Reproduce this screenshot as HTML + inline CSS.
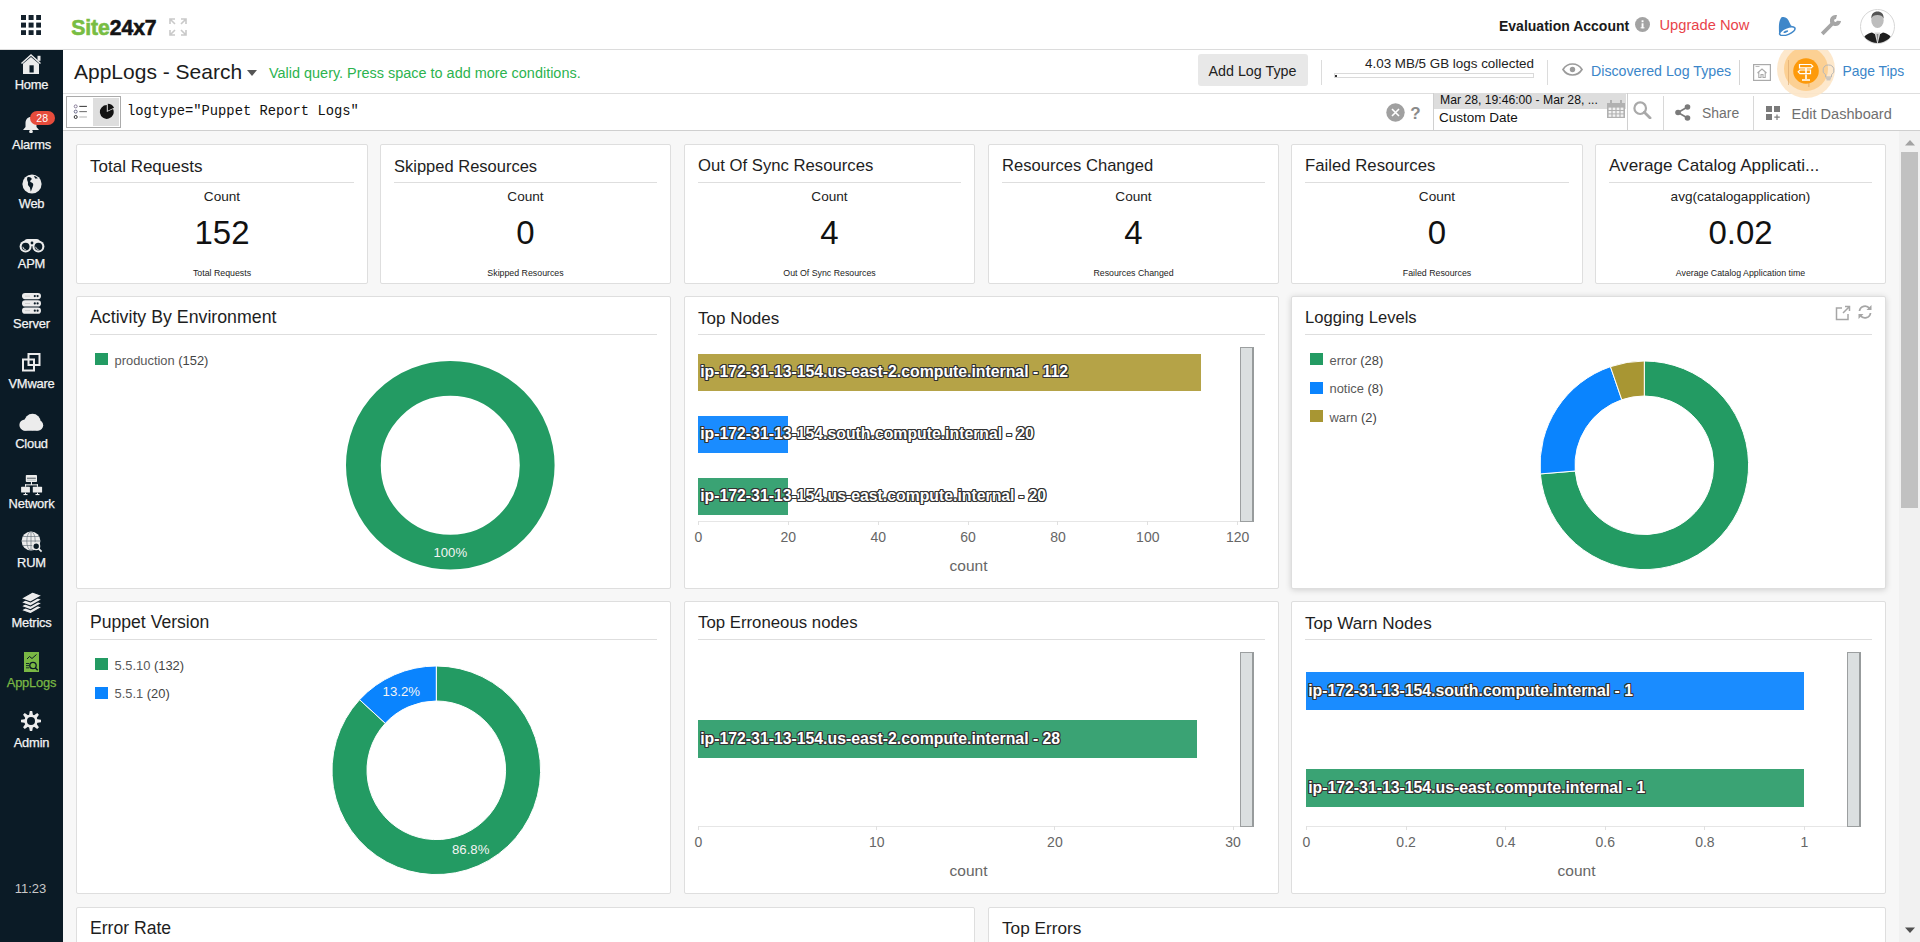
<!DOCTYPE html>
<html><head><meta charset="utf-8"><title>AppLogs - Search</title>
<style>
html,body{margin:0;padding:0;}
body{width:1920px;height:942px;overflow:hidden;position:relative;background:#f7f7f7;font-family:"Liberation Sans",sans-serif;}
.t{position:absolute;white-space:nowrap;font-family:"Liberation Sans",sans-serif;}
.mo{font-family:"Liberation Mono",monospace;}
svg{display:block;}
</style></head><body>

<div style="position:absolute;left:0px;top:0px;width:1920px;height:49px;background:#fff;"></div>
<div style="position:absolute;left:0px;top:49px;width:1920px;height:1px;background:#dcdcdc;"></div>
<svg style="position:absolute;left:21px;top:15px;" width="20.2" height="20.2" viewBox="0 0 20.2 20.2"><rect x="0" y="0" width="5" height="5" fill="#15222d"/><rect x="0" y="7.6" width="5" height="5" fill="#15222d"/><rect x="0" y="15.2" width="5" height="5" fill="#15222d"/><rect x="7.6" y="0" width="5" height="5" fill="#15222d"/><rect x="7.6" y="7.6" width="5" height="5" fill="#15222d"/><rect x="7.6" y="15.2" width="5" height="5" fill="#15222d"/><rect x="15.2" y="0" width="5" height="5" fill="#15222d"/><rect x="15.2" y="7.6" width="5" height="5" fill="#15222d"/><rect x="15.2" y="15.2" width="5" height="5" fill="#15222d"/></svg>
<div class="t" style="left:71.30px;top:16.54px;font-size:21.20px;line-height:21.20px;color:#222;font-weight:700;letter-spacing:-0.1px;"><span style="color:#78bd43;-webkit-text-stroke:0.6px #78bd43">Site</span><span style="color:#141414;-webkit-text-stroke:0.6px #141414">24x7</span></div>
<svg style="position:absolute;left:169px;top:18px;" width="18" height="18" viewBox="0 0 18 18"><g stroke="#c9c9c9" stroke-width="1.6" fill="none"><path d="M1 6V1h5M1 1l5 5"/><path d="M17 6V1h-5M17 1l-5 5"/><path d="M1 12v5h5M1 17l5-5"/><path d="M17 12v5h-5M17 17l-5-5"/></g></svg>
<div class="t" style="left:1499.00px;top:18.94px;font-size:14.00px;line-height:14.00px;color:#1b1b1b;font-weight:700;">Evaluation Account</div>
<svg style="position:absolute;left:1635px;top:17px;" width="15" height="15" viewBox="0 0 15 15"><circle cx="7.5" cy="7.5" r="7.5" fill="#a3a3a3"/><rect x="6.6" y="6.3" width="1.9" height="5" fill="#fff"/><rect x="6.6" y="3.3" width="1.9" height="1.9" fill="#fff"/><rect x="5.6" y="10.3" width="3.9" height="1" fill="#fff"/></svg>
<div class="t" style="left:1659.50px;top:18.35px;font-size:14.70px;line-height:14.70px;color:#e8434a;">Upgrade Now</div>
<svg style="position:absolute;left:1777px;top:15px;" width="21" height="21" viewBox="0 0 21 21"><path d="M4.5 2.2C8.5 1 11 3.5 12.5 7.5L14 10.5 18.6 12.8 3 19.8 2 17C1.8 12 1.5 6 4.5 2.2z" fill="#3f87c9"/><ellipse cx="10.3" cy="16.2" rx="8.2" ry="3.4" fill="#fff" stroke="#3f87c9" stroke-width="1.5" transform="rotate(-22 10.3 16.2)"/><ellipse cx="8.8" cy="16.6" rx="2.6" ry="1" fill="#3f87c9" transform="rotate(-22 8.8 16.6)"/></svg>
<svg style="position:absolute;left:1819px;top:13px;" width="24" height="24" viewBox="0 0 24 24"><path d="M3.2 20.8L14 10" stroke="#a6a6a6" stroke-width="3.8"/><path d="M19.98 7.87A3.5 3.5 0 1 1 17.46 4.14" fill="none" stroke="#a6a6a6" stroke-width="4.2"/></svg>
<svg style="position:absolute;left:1860px;top:8.5px;" width="35" height="35" viewBox="0 0 35 35"><defs><clipPath id="avc"><circle cx="17.5" cy="17.5" r="16.6"/></clipPath></defs><circle cx="17.5" cy="17.5" r="17" fill="#fff" stroke="#d6d6d6" stroke-width="1"/><g clip-path="url(#avc)"><ellipse cx="17.5" cy="11.5" rx="6.2" ry="7.6" fill="#bdbdbd"/><path d="M11.3 9.5c0-5 2.5-7 6.2-7s6.2 2 6.2 7c-1-2.5-3-3.5-6.2-3.5s-5.2 1-6.2 3.5z" fill="#555"/><path d="M1 36c1-8 5-11 11-12.5l5.5 3 5.5-3c6 1.5 10 4.5 11 12.5z" fill="#1f1f1f"/><path d="M14.5 23.5l3 12 3-12z" fill="#d8d8d8"/><path d="M16.6 25l.9 8 .9-8z" fill="#8a8a8a"/></g></svg>
<div style="position:absolute;left:0px;top:50px;width:63px;height:892px;background:#0b1b26;"></div>
<div class="t" style="left:31.50px;transform:translateX(-50%);top:78.77px;font-size:12.90px;line-height:12.90px;color:#f4f4f4;letter-spacing:-0.2px;-webkit-text-stroke:0.25px #f4f4f4;">Home</div>
<div class="t" style="left:31.50px;transform:translateX(-50%);top:138.61px;font-size:12.90px;line-height:12.90px;color:#f4f4f4;letter-spacing:-0.2px;-webkit-text-stroke:0.25px #f4f4f4;">Alarms</div>
<div class="t" style="left:31.50px;transform:translateX(-50%);top:198.45px;font-size:12.90px;line-height:12.90px;color:#f4f4f4;letter-spacing:-0.2px;-webkit-text-stroke:0.25px #f4f4f4;">Web</div>
<div class="t" style="left:31.50px;transform:translateX(-50%);top:258.29px;font-size:12.90px;line-height:12.90px;color:#f4f4f4;letter-spacing:-0.2px;-webkit-text-stroke:0.25px #f4f4f4;">APM</div>
<div class="t" style="left:31.50px;transform:translateX(-50%);top:318.13px;font-size:12.90px;line-height:12.90px;color:#f4f4f4;letter-spacing:-0.2px;-webkit-text-stroke:0.25px #f4f4f4;">Server</div>
<div class="t" style="left:31.50px;transform:translateX(-50%);top:377.97px;font-size:12.90px;line-height:12.90px;color:#f4f4f4;letter-spacing:-0.2px;-webkit-text-stroke:0.25px #f4f4f4;">VMware</div>
<div class="t" style="left:31.50px;transform:translateX(-50%);top:437.81px;font-size:12.90px;line-height:12.90px;color:#f4f4f4;letter-spacing:-0.2px;-webkit-text-stroke:0.25px #f4f4f4;">Cloud</div>
<div class="t" style="left:31.50px;transform:translateX(-50%);top:497.65px;font-size:12.90px;line-height:12.90px;color:#f4f4f4;letter-spacing:-0.2px;-webkit-text-stroke:0.25px #f4f4f4;">Network</div>
<div class="t" style="left:31.50px;transform:translateX(-50%);top:557.49px;font-size:12.90px;line-height:12.90px;color:#f4f4f4;letter-spacing:-0.2px;-webkit-text-stroke:0.25px #f4f4f4;">RUM</div>
<div class="t" style="left:31.50px;transform:translateX(-50%);top:617.33px;font-size:12.90px;line-height:12.90px;color:#f4f4f4;letter-spacing:-0.2px;-webkit-text-stroke:0.25px #f4f4f4;">Metrics</div>
<div class="t" style="left:31.50px;transform:translateX(-50%);top:677.17px;font-size:12.90px;line-height:12.90px;color:#7ab844;letter-spacing:-0.2px;-webkit-text-stroke:0.25px #7ab844;">AppLogs</div>
<div class="t" style="left:31.50px;transform:translateX(-50%);top:737.01px;font-size:12.90px;line-height:12.90px;color:#f4f4f4;letter-spacing:-0.2px;-webkit-text-stroke:0.25px #f4f4f4;">Admin</div>
<svg style="position:absolute;left:20px;top:53px;" width="23" height="23" viewBox="0 0 23 23"><path d="M1.5 10.5L11 2l9.5 8.5" fill="none" stroke="#ececec" stroke-width="1.5"/><path d="M3 21V10.8L11 4 19 10.8V21z" fill="#ececec"/><rect x="17.5" y="2.8" width="3" height="5" fill="#ececec"/><rect x="9.5" y="12.3" width="4.2" height="7.2" fill="#0b1b26"/></svg>
<svg style="position:absolute;left:22px;top:114.54px;" width="18" height="18" viewBox="0 0 18 18"><path d="M9 2c-3.5 0-5.5 2.5-5.5 6.5v3.5L1 15h16l-2.5-3V8.5C14.5 4.5 12.5 2 9 2z" fill="#ececec"/><circle cx="9" cy="16.5" r="1.8" fill="#ececec"/></svg>
<svg style="position:absolute;left:21.5px;top:173.88px;" width="20" height="20" viewBox="0 0 20 20"><circle cx="10" cy="10" r="9.6" fill="#ececec"/><path d="M5.5 3.2c1.5-.3 3 .2 4 1 .6 1.2-.5 2-1.2 2.6-.5.8.3 1.5 1.3 1.8 1.3.5 1.8 1.5 1.6 2.6-.3 1.2-.8 2.2-1.2 3.3-.3 1-.7 2.3-1.3 3-.3-1.5-.4-3-.9-4.2-.5-1-1.6-1.5-1.8-2.6-.2-1.2.3-2.2-.3-3.3C5.4 6.5 4.5 5 5.5 3.2z" fill="#0b1b26"/><path d="M12 2c1.5.3 3 1 3.8 2.2-.8.3-1.8 0-2.3.6-.6-.7-1.2-1.6-1.5-2.8z" fill="#0b1b26"/></svg>
<svg style="position:absolute;left:18.5px;top:237.5px;" width="26" height="15" viewBox="0 0 26 15"><g fill="#ececec"><circle cx="6.6" cy="8.4" r="6"/><circle cx="19.4" cy="8.4" r="6"/><rect x="5" y="1" width="16" height="7" rx="3.5"/></g><circle cx="6.6" cy="8.6" r="3.9" fill="#0b1b26"/><circle cx="19.4" cy="8.6" r="3.9" fill="#0b1b26"/><path d="M3.9 8.8a2.8 2.8 0 0 0 2.8 2.8" fill="none" stroke="#ececec" stroke-width=".9"/><path d="M16.7 8.8a2.8 2.8 0 0 0 2.8 2.8" fill="none" stroke="#ececec" stroke-width=".9"/><circle cx="13" cy="5" r="1.4" fill="#0b1b26"/></svg>
<svg style="position:absolute;left:22px;top:293px;" width="19" height="22" viewBox="0 0 19 22"><rect x="0" y="0" width="19" height="6.2" rx="3.1" fill="#ececec"/><rect x="3" y="2.7" width="5" height=".8" fill="#c8c8c8"/><circle cx="12.8" cy="3.1" r="1.1" fill="#0b1b26"/><circle cx="15.6" cy="3.1" r="1.1" fill="#0b1b26"/><rect x="0" y="7.3" width="19" height="6.2" rx="3.1" fill="#ececec"/><rect x="3" y="10" width="5" height=".8" fill="#c8c8c8"/><circle cx="12.8" cy="10.4" r="1.1" fill="#0b1b26"/><circle cx="15.6" cy="10.4" r="1.1" fill="#0b1b26"/><rect x="0" y="14.6" width="19" height="6.2" rx="3.1" fill="#ececec"/><rect x="3" y="17.3" width="5" height=".8" fill="#c8c8c8"/><circle cx="12.8" cy="17.7" r="1.1" fill="#0b1b26"/><circle cx="15.6" cy="17.7" r="1.1" fill="#0b1b26"/></svg>
<svg style="position:absolute;left:22px;top:353.4px;" width="19" height="19" viewBox="0 0 19 19"><rect x="6.5" y="1" width="11" height="11" fill="none" stroke="#ececec" stroke-width="2"/><rect x="1" y="6.5" width="11" height="11" fill="none" stroke="#ececec" stroke-width="2"/></svg>
<svg style="position:absolute;left:18px;top:412px;" width="27" height="20" viewBox="0 0 27 20"><g fill="#ececec"><rect x="4" y="12" width="18" height="6.7" rx="3"/><circle cx="7" cy="13" r="5.6"/><circle cx="14.5" cy="10" r="8.2"/><circle cx="20" cy="13.3" r="5.2"/></g></svg>
<svg style="position:absolute;left:20px;top:474px;" width="23" height="22" viewBox="0 0 23 22"><g fill="#ececec"><rect x="5.8" y="1" width="11.2" height="7" rx=".8"/><rect x="10.9" y="8" width="1.1" height="3"/><rect x="5" y="10.3" width="13" height="1.1"/><rect x="5" y="10.3" width="1.1" height="2.5"/><rect x="16.9" y="10.3" width="1.1" height="2.5"/><rect x="1.1" y="12.8" width="8.8" height="5.8" rx=".6"/><rect x="12.8" y="12.8" width="9.3" height="5.8" rx=".6"/><rect x="3.5" y="20" width="4" height="1.1"/><rect x="15.5" y="20" width="4" height="1.1"/><rect x="5" y="18.6" width="1" height="1.5"/><rect x="17" y="18.6" width="1" height="1.5"/></g><rect x="7" y="3.8" width="8.8" height=".7" fill="#0b1b26"/><rect x="7" y="5.8" width="8.8" height=".6" fill="#9aa"/></svg>
<svg style="position:absolute;left:21px;top:531.42px;" width="22" height="22" viewBox="0 0 22 22"><circle cx="10" cy="10" r="9.4" fill="#ececec"/><g stroke="#6b7780" stroke-width=".7" fill="none"><ellipse cx="10" cy="10" rx="4.2" ry="9.4"/><path d="M.6 10h18.8M1.8 5.5h16.4M1.8 14.5h16.4M10 .6v18.8"/></g><circle cx="15.2" cy="15.2" r="3.4" fill="#0b1b26" stroke="#ececec" stroke-width="1.4"/><path d="M17.6 17.6l3 3" stroke="#ececec" stroke-width="1.6"/></svg>
<svg style="position:absolute;left:20px;top:591px;" width="23" height="22" viewBox="0 0 23 22"><path d="M1 19.2 L12.5 12.7 22 16.2 10.5 22.7 z" fill="#ececec" stroke="#0b1b26" stroke-width="1.1" stroke-linejoin="round"/><path d="M1 15.3 L12.5 8.8 22 12.3 10.5 18.8 z" fill="#ececec" stroke="#0b1b26" stroke-width="1.1" stroke-linejoin="round"/><path d="M1 11.4 L12.5 4.9 22 8.4 10.5 14.9 z" fill="#ececec" stroke="#0b1b26" stroke-width="1.1" stroke-linejoin="round"/><path d="M1 7.5 L12.5 1 22 4.5 10.5 11 z" fill="#ececec" stroke="#0b1b26" stroke-width="1.1" stroke-linejoin="round"/></svg>
<svg style="position:absolute;left:24px;top:652px;" width="15" height="20" viewBox="0 0 15 20"><rect x="0" y="0" width="15" height="20" fill="#7ab844"/><path d="M3 7l2.5-2.5 2.5 2 4.5-4" stroke="#0b1b26" stroke-width="1" fill="none"/><rect x="2" y="11" width="3.2" height=".9" fill="#0b1b26"/><rect x="2" y="13.2" width="3.2" height=".9" fill="#0b1b26"/><rect x="2" y="15.4" width="3.2" height=".9" fill="#0b1b26"/><circle cx="9" cy="13.5" r="3.2" fill="none" stroke="#0b1b26" stroke-width="1.3"/><path d="M11.2 15.8l2.5 2.5" stroke="#0b1b26" stroke-width="1.5"/></svg>
<svg style="position:absolute;left:21.3px;top:711px;" width="20" height="20" viewBox="0 0 20 20"><g fill="#ececec"><path d="M8.8 0h2.4l.9 5h-4.2z" transform="rotate(0 10 10)"/><path d="M8.8 0h2.4l.9 5h-4.2z" transform="rotate(45 10 10)"/><path d="M8.8 0h2.4l.9 5h-4.2z" transform="rotate(90 10 10)"/><path d="M8.8 0h2.4l.9 5h-4.2z" transform="rotate(135 10 10)"/><path d="M8.8 0h2.4l.9 5h-4.2z" transform="rotate(180 10 10)"/><path d="M8.8 0h2.4l.9 5h-4.2z" transform="rotate(225 10 10)"/><path d="M8.8 0h2.4l.9 5h-4.2z" transform="rotate(270 10 10)"/><path d="M8.8 0h2.4l.9 5h-4.2z" transform="rotate(315 10 10)"/><circle cx="10" cy="10" r="6.6"/></g><circle cx="10" cy="10" r="4" fill="#0b1b26"/></svg>
<div style="position:absolute;left:29.5px;top:110.5px;width:25.5px;height:14px;background:#e74c3c;border-radius:7px;"></div>
<div class="t" style="left:42.20px;transform:translateX(-50%);top:112.71px;font-size:10.50px;line-height:10.50px;color:#fff;">28</div>
<div class="t" style="left:30.50px;transform:translateX(-50%);top:881.99px;font-size:13.00px;line-height:13.00px;color:#c9c9c9;">11:23</div>
<div style="position:absolute;left:63px;top:50px;width:1857px;height:43px;background:#fff;"></div>
<div style="position:absolute;left:63px;top:93px;width:1857px;height:1px;background:#dedede;"></div>
<div class="t" style="left:74.00px;top:61.11px;font-size:21.00px;line-height:21.00px;color:#1c1c1c;">AppLogs - Search</div>
<svg style="position:absolute;left:247px;top:70px;" width="10" height="6" viewBox="0 0 10 6"><path d="M0 0h10L5 6z" fill="#555"/></svg>
<div class="t" style="left:269.00px;top:65.56px;font-size:14.45px;line-height:14.45px;color:#2cb34f;">Valid query. Press space to add more conditions.</div>
<div style="position:absolute;left:1198px;top:54px;width:110px;height:32px;background:#e8e8e8;border-radius:3px;"></div>
<div class="t" style="left:1252.50px;transform:translateX(-50%);top:64.39px;font-size:14.30px;line-height:14.30px;color:#222;">Add Log Type</div>
<div style="position:absolute;left:1321px;top:60px;width:1px;height:25px;background:#dcdcdc;"></div>
<div class="t" style="right:386.00px;top:57.25px;font-size:13.40px;line-height:13.40px;color:#222;">4.03 MB/5 GB logs collected</div>
<div style="position:absolute;left:1334px;top:73px;width:200px;height:5px;box-sizing:border-box;border:1px solid #dadada;background:#fff;"></div>
<div style="position:absolute;left:1335px;top:75px;width:2px;height:2px;background:#333;"></div>
<div style="position:absolute;left:1547px;top:60px;width:1px;height:25px;background:#dcdcdc;"></div>
<svg style="position:absolute;left:1562px;top:63px;" width="21" height="13" viewBox="0 0 21 13"><path d="M1 6.5C3.5 2.5 6.8 1 10.5 1s7 1.5 9.5 5.5C17.5 10.5 14.2 12 10.5 12S3.5 10.5 1 6.5z" fill="none" stroke="#9b9b9b" stroke-width="1.7"/><circle cx="10.5" cy="6.5" r="2.7" fill="#9b9b9b"/></svg>
<div class="t" style="left:1591.00px;top:64.47px;font-size:14.20px;line-height:14.20px;color:#3b86c9;">Discovered Log Types</div>
<div style="position:absolute;left:1738.5px;top:60px;width:1.2px;height:25px;background:#d4d4d4;"></div>
<svg style="position:absolute;left:1753px;top:64px;" width="18" height="17" viewBox="0 0 18 17"><rect x=".6" y=".6" width="16.8" height="15.8" fill="none" stroke="#aaa" stroke-width="1.2"/><path d="M4.5 9L9 5l4.5 4M5.8 8v5.5h2.2V10.5h2V13.5h2.2V8" fill="none" stroke="#aaa" stroke-width="1.1"/><path d="M2.5 2.5h4" stroke="#aaa" stroke-width=".8"/></svg>
<div style="position:absolute;left:1788px;top:60px;width:1px;height:25px;background:#d9d9d9;"></div>
<div class="t" style="left:1842.50px;top:64.73px;font-size:13.90px;line-height:13.90px;color:#3b86c9;">Page Tips</div>
<div style="position:absolute;left:63px;top:94px;width:1857px;height:36px;background:#fff;"></div>
<div style="position:absolute;left:63px;top:130px;width:1857px;height:1px;background:#cfcfcf;"></div>
<div style="position:absolute;left:66px;top:96px;width:55px;height:32px;box-sizing:border-box;border:1px solid #ababab;background:#fff;"></div>
<div style="position:absolute;left:93px;top:98px;width:26px;height:28px;background:#dedede;"></div>
<svg style="position:absolute;left:73px;top:104px;" width="16" height="16" viewBox="0 0 16 16"><circle cx="2.7" cy="2.4" r="1.5" fill="none" stroke="#8a7f9a" stroke-width="1"/><circle cx="2.7" cy="7.6" r="1.5" fill="none" stroke="#6a6a8a" stroke-width="1"/><circle cx="2.7" cy="13" r="1.5" fill="none" stroke="#333" stroke-width="1"/><path d="M6.3 2.4h7.6" stroke="#444" stroke-width="1.1"/><path d="M6.3 7.6h7.6" stroke="#777" stroke-width="1.1"/><path d="M6.3 13h7.6" stroke="#bbb" stroke-width="1.1"/></svg>
<svg style="position:absolute;left:98px;top:103px;" width="18" height="18" viewBox="0 0 18 18"><path d="M8.80 9.00 L15.05 6.08 A6.9 6.9 0 1 1 8.80 2.10 Z" fill="#121212"/><path d="M9.80 7.70 L9.80 0.80 A6.9 6.9 0 0 1 16.05 4.78 Z" fill="#121212"/></svg>
<div class="t mo" style="left:127.00px;top:104.93px;font-size:13.80px;line-height:13.80px;color:#111;">logtype="Puppet Report Logs"</div>
<svg style="position:absolute;left:1386px;top:103px;" width="19" height="19" viewBox="0 0 19 19"><circle cx="9.5" cy="9.5" r="9.2" fill="#a0a0a0"/><path d="M6 6l7 7M13 6l-7 7" stroke="#fff" stroke-width="1.6"/></svg>
<div class="t" style="left:1415.50px;transform:translateX(-50%);top:105.10px;font-size:17.00px;line-height:17.00px;color:#8a8a8a;font-weight:700;">?</div>
<div style="position:absolute;left:1433px;top:93px;width:1px;height:37px;background:#d0d0d0;"></div>
<div style="position:absolute;left:1434px;top:94px;width:192px;height:15px;background:#dddddd;"></div>
<div class="t" style="left:1440.00px;top:94.47px;font-size:12.20px;line-height:12.20px;color:#111;">Mar 28, 19:46:00 - Mar 28, ...</div>
<div class="t" style="left:1439.00px;top:111.07px;font-size:13.50px;line-height:13.50px;color:#111;">Custom Date</div>
<svg style="position:absolute;left:1607px;top:100px;" width="18" height="18" viewBox="0 0 18 18"><rect x="0" y="3" width="18" height="15" fill="#b1b1b1"/><rect x="3" y="0" width="2" height="4" fill="#b1b1b1"/><rect x="13" y="0" width="2" height="4" fill="#b1b1b1"/><rect x="1.6" y="7.6" width="2.8" height="2.4" fill="#f2f2f2"/><rect x="5.6" y="7.6" width="2.8" height="2.4" fill="#f2f2f2"/><rect x="9.6" y="7.6" width="2.8" height="2.4" fill="#f2f2f2"/><rect x="13.6" y="7.6" width="2.8" height="2.4" fill="#f2f2f2"/><rect x="1.6" y="11" width="2.8" height="2.4" fill="#f2f2f2"/><rect x="5.6" y="11" width="2.8" height="2.4" fill="#f2f2f2"/><rect x="9.6" y="11" width="2.8" height="2.4" fill="#f2f2f2"/><rect x="13.6" y="11" width="2.8" height="2.4" fill="#f2f2f2"/><rect x="1.6" y="14.4" width="2.8" height="2.4" fill="#f2f2f2"/><rect x="5.6" y="14.4" width="2.8" height="2.4" fill="#f2f2f2"/><rect x="9.6" y="14.4" width="2.8" height="2.4" fill="#f2f2f2"/><rect x="13.6" y="14.4" width="2.8" height="2.4" fill="#f2f2f2"/></svg>
<div style="position:absolute;left:1626.5px;top:93px;width:1px;height:37px;background:#d0d0d0;"></div>
<svg style="position:absolute;left:1633px;top:101px;" width="19" height="18" viewBox="0 0 19 18"><circle cx="7.2" cy="7.2" r="5.8" fill="none" stroke="#a9a9a9" stroke-width="2.2"/><path d="M11.3 11.3l5.8 5.6" stroke="#a9a9a9" stroke-width="2.8" stroke-linecap="round"/></svg>
<div style="position:absolute;left:1663px;top:96px;width:1px;height:34px;background:#d8d8d8;"></div>
<svg style="position:absolute;left:1675px;top:104px;" width="16" height="17" viewBox="0 0 16 17"><g fill="#7a7a7a"><circle cx="3" cy="8.5" r="2.8"/><circle cx="12.5" cy="3" r="2.8"/><circle cx="12.5" cy="14" r="2.8"/></g><path d="M3 8.5L12.5 3M3 8.5l9.5 5.5" stroke="#7a7a7a" stroke-width="1.6"/></svg>
<div class="t" style="left:1702.00px;top:107.08px;font-size:13.95px;line-height:13.95px;color:#707070;">Share</div>
<div style="position:absolute;left:1753px;top:96px;width:1px;height:34px;background:#d8d8d8;"></div>
<svg style="position:absolute;left:1765.5px;top:105.5px;" width="15" height="14" viewBox="0 0 15 14"><g fill="#7a7a7a"><rect x="0" y="0" width="6" height="6"/><rect x="8" y="0" width="6" height="6"/><rect x="0" y="8" width="6" height="6"/></g><path d="M11 8.5v5.5M8.3 11.2h5.5" stroke="#7a7a7a" stroke-width="1.2"/></svg>
<div class="t" style="left:1791.50px;top:106.58px;font-size:14.55px;line-height:14.55px;color:#707070;">Edit Dashboard</div>
<svg style="position:absolute;left:1776px;top:50px;overflow:hidden;" width="60" height="50" viewBox="0 0 60 50"><circle cx="30" cy="19" r="29" fill="#fde6c6" fill-opacity=".9"/><circle cx="30" cy="19" r="22" fill="#fccb88" fill-opacity=".85"/><circle cx="30" cy="21" r="12.8" fill="#fd9a0b"/><rect x="12" y="10" width="1" height="25" fill="#d9a56a" fill-opacity=".6"/><rect x="32.5" y="33" width=".8" height="4" fill="#e0a050"/><g fill="none" stroke="#fff" stroke-width="1.2"><path d="M23.5 14.5h11.5l1.8 1.7-1.8 1.7H23.5z"/><path d="M34.5 20h-10.5l-1.8 1.8 1.8 1.8h10.5z"/></g><path d="M30 18v6.5M30 25v4" stroke="#fff" stroke-width="1.6"/><path d="M26 30h8" stroke="#fff" stroke-width="1.5"/></svg>
<svg style="position:absolute;left:1822px;top:64px;" width="13" height="17" viewBox="0 0 13 17"><path d="M6.5 1a5.3 5.3 0 0 0-3 9.8V13h6v-2.2A5.3 5.3 0 0 0 6.5 1z" fill="none" stroke="#b8b8b8" stroke-width="1"/><path d="M4 14.2h5M4.5 15.8h4" stroke="#b8b8b8" stroke-width="1"/></svg>
<div style="position:absolute;left:1899px;top:131px;width:21px;height:811px;background:#f1f1f1;"></div>
<div style="position:absolute;left:1901px;top:152px;width:17px;height:356px;background:#c1c1c1;"></div>
<svg style="position:absolute;left:1905px;top:138.5px;" width="10" height="7" viewBox="0 0 10 7"><path d="M0 6.5L5 1l5 5.5z" fill="#a3a3a3"/></svg>
<svg style="position:absolute;left:1905px;top:927px;" width="10" height="7" viewBox="0 0 10 7"><path d="M0 .5L5 6l5-5.5z" fill="#505050"/></svg>
<div style="position:absolute;left:76px;top:144px;width:292px;height:140px;box-sizing:border-box;background:#fff;border:1px solid #dedede;border-radius:2px;"></div>
<div class="t" style="left:90.00px;top:157.60px;font-size:17.00px;line-height:17.00px;color:#1e1e1e;">Total Requests</div>
<div style="position:absolute;left:90px;top:182px;width:264px;height:1px;background:#dedede;"></div>
<div class="t" style="left:222.00px;transform:translateX(-50%);top:190.48px;font-size:13.60px;line-height:13.60px;color:#222;">Count</div>
<div class="t" style="left:222.00px;transform:translateX(-50%);top:216.25px;font-size:33.00px;line-height:33.00px;color:#111;">152</div>
<div class="t" style="left:222.00px;transform:translateX(-50%);top:268.55px;font-size:8.80px;line-height:8.80px;color:#222;">Total Requests</div>
<div style="position:absolute;left:380px;top:144px;width:291px;height:140px;box-sizing:border-box;background:#fff;border:1px solid #dedede;border-radius:2px;"></div>
<div class="t" style="left:394.00px;top:158.02px;font-size:16.50px;line-height:16.50px;color:#1e1e1e;">Skipped Resources</div>
<div style="position:absolute;left:394px;top:182px;width:263px;height:1px;background:#dedede;"></div>
<div class="t" style="left:525.50px;transform:translateX(-50%);top:190.48px;font-size:13.60px;line-height:13.60px;color:#222;">Count</div>
<div class="t" style="left:525.50px;transform:translateX(-50%);top:216.25px;font-size:33.00px;line-height:33.00px;color:#111;">0</div>
<div class="t" style="left:525.50px;transform:translateX(-50%);top:268.55px;font-size:8.80px;line-height:8.80px;color:#222;">Skipped Resources</div>
<div style="position:absolute;left:684px;top:144px;width:291px;height:140px;box-sizing:border-box;background:#fff;border:1px solid #dedede;border-radius:2px;"></div>
<div class="t" style="left:698.00px;top:157.86px;font-size:16.70px;line-height:16.70px;color:#1e1e1e;">Out Of Sync Resources</div>
<div style="position:absolute;left:698px;top:182px;width:263px;height:1px;background:#dedede;"></div>
<div class="t" style="left:829.50px;transform:translateX(-50%);top:190.48px;font-size:13.60px;line-height:13.60px;color:#222;">Count</div>
<div class="t" style="left:829.50px;transform:translateX(-50%);top:216.25px;font-size:33.00px;line-height:33.00px;color:#111;">4</div>
<div class="t" style="left:829.50px;transform:translateX(-50%);top:268.55px;font-size:8.80px;line-height:8.80px;color:#222;">Out Of Sync Resources</div>
<div style="position:absolute;left:988px;top:144px;width:291px;height:140px;box-sizing:border-box;background:#fff;border:1px solid #dedede;border-radius:2px;"></div>
<div class="t" style="left:1002.00px;top:157.94px;font-size:16.60px;line-height:16.60px;color:#1e1e1e;">Resources Changed</div>
<div style="position:absolute;left:1002px;top:182px;width:263px;height:1px;background:#dedede;"></div>
<div class="t" style="left:1133.50px;transform:translateX(-50%);top:190.48px;font-size:13.60px;line-height:13.60px;color:#222;">Count</div>
<div class="t" style="left:1133.50px;transform:translateX(-50%);top:216.25px;font-size:33.00px;line-height:33.00px;color:#111;">4</div>
<div class="t" style="left:1133.50px;transform:translateX(-50%);top:268.55px;font-size:8.80px;line-height:8.80px;color:#222;">Resources Changed</div>
<div style="position:absolute;left:1291px;top:144px;width:292px;height:140px;box-sizing:border-box;background:#fff;border:1px solid #dedede;border-radius:2px;"></div>
<div class="t" style="left:1305.00px;top:157.81px;font-size:16.75px;line-height:16.75px;color:#1e1e1e;">Failed Resources</div>
<div style="position:absolute;left:1305px;top:182px;width:264px;height:1px;background:#dedede;"></div>
<div class="t" style="left:1437.00px;transform:translateX(-50%);top:190.48px;font-size:13.60px;line-height:13.60px;color:#222;">Count</div>
<div class="t" style="left:1437.00px;transform:translateX(-50%);top:216.25px;font-size:33.00px;line-height:33.00px;color:#111;">0</div>
<div class="t" style="left:1437.00px;transform:translateX(-50%);top:268.55px;font-size:8.80px;line-height:8.80px;color:#222;">Failed Resources</div>
<div style="position:absolute;left:1595px;top:144px;width:291px;height:140px;box-sizing:border-box;background:#fff;border:1px solid #dedede;border-radius:2px;"></div>
<div class="t" style="left:1609.00px;top:157.47px;font-size:17.15px;line-height:17.15px;color:#1e1e1e;">Average Catalog Applicati...</div>
<div style="position:absolute;left:1609px;top:182px;width:263px;height:1px;background:#dedede;"></div>
<div class="t" style="left:1740.50px;transform:translateX(-50%);top:190.48px;font-size:13.60px;line-height:13.60px;color:#222;">avg(catalogapplication)</div>
<div class="t" style="left:1740.50px;transform:translateX(-50%);top:216.25px;font-size:33.00px;line-height:33.00px;color:#111;">0.02</div>
<div class="t" style="left:1740.50px;transform:translateX(-50%);top:268.55px;font-size:8.80px;line-height:8.80px;color:#222;">Average Catalog Application time</div>
<div style="position:absolute;left:76px;top:296px;width:595px;height:293px;box-sizing:border-box;background:#fff;border:1px solid #dedede;border-radius:2px;"></div>
<div class="t" style="left:90.00px;top:308.97px;font-size:17.75px;line-height:17.75px;color:#1e1e1e;">Activity By Environment</div>
<div style="position:absolute;left:90px;top:334px;width:567px;height:1px;background:#dedede;"></div>
<div style="position:absolute;left:684px;top:296px;width:595px;height:293px;box-sizing:border-box;background:#fff;border:1px solid #dedede;border-radius:2px;"></div>
<div class="t" style="left:698.00px;top:309.60px;font-size:17.00px;line-height:17.00px;color:#1e1e1e;">Top Nodes</div>
<div style="position:absolute;left:698px;top:334px;width:567px;height:1px;background:#dedede;"></div>
<div style="position:absolute;left:1291px;top:296px;width:595px;height:293px;box-sizing:border-box;background:#fff;border:1px solid #dedede;border-radius:2px;box-shadow:0 1px 6px rgba(0,0,0,.16);"></div>
<div class="t" style="left:1305.00px;top:309.94px;font-size:16.60px;line-height:16.60px;color:#1e1e1e;">Logging Levels</div>
<div style="position:absolute;left:1305px;top:334px;width:567px;height:1px;background:#dedede;"></div>
<div style="position:absolute;left:76px;top:601px;width:595px;height:293px;box-sizing:border-box;background:#fff;border:1px solid #dedede;border-radius:2px;"></div>
<div class="t" style="left:90.00px;top:614.09px;font-size:17.60px;line-height:17.60px;color:#1e1e1e;">Puppet Version</div>
<div style="position:absolute;left:90px;top:639px;width:567px;height:1px;background:#dedede;"></div>
<div style="position:absolute;left:684px;top:601px;width:595px;height:293px;box-sizing:border-box;background:#fff;border:1px solid #dedede;border-radius:2px;"></div>
<div class="t" style="left:698.00px;top:614.77px;font-size:16.80px;line-height:16.80px;color:#1e1e1e;">Top Erroneous nodes</div>
<div style="position:absolute;left:698px;top:639px;width:567px;height:1px;background:#dedede;"></div>
<div style="position:absolute;left:1291px;top:601px;width:595px;height:293px;box-sizing:border-box;background:#fff;border:1px solid #dedede;border-radius:2px;"></div>
<div class="t" style="left:1305.00px;top:614.52px;font-size:17.10px;line-height:17.10px;color:#1e1e1e;">Top Warn Nodes</div>
<div style="position:absolute;left:1305px;top:639px;width:567px;height:1px;background:#dedede;"></div>
<div style="position:absolute;left:76px;top:907px;width:899px;height:60px;box-sizing:border-box;background:#fff;border:1px solid #dedede;border-radius:2px;"></div>
<div class="t" style="left:90.00px;top:920.09px;font-size:17.60px;line-height:17.60px;color:#1e1e1e;">Error Rate</div>
<div style="position:absolute;left:90px;top:945px;width:871px;height:1px;background:#dedede;"></div>
<div style="position:absolute;left:988px;top:907px;width:898px;height:60px;box-sizing:border-box;background:#fff;border:1px solid #dedede;border-radius:2px;"></div>
<div class="t" style="left:1002.00px;top:920.43px;font-size:17.20px;line-height:17.20px;color:#1e1e1e;">Top Errors</div>
<div style="position:absolute;left:1002px;top:945px;width:870px;height:1px;background:#dedede;"></div>
<div style="position:absolute;left:95px;top:353px;width:13px;height:12px;background:#239b63;"></div>
<div class="t" style="left:114.50px;top:354.77px;font-size:12.90px;line-height:12.90px;color:#222;"><span style="color:#595959">production</span> <span style="color:#444">(152)</span></div>
<svg style="position:absolute;left:343.7px;top:358.9px;" width="212.6" height="212.6" viewBox="0 0 212.6 212.6"><circle cx="106.3" cy="106.3" r="86.9" fill="none" stroke="#239b63" stroke-width="34.8"/></svg>
<div class="t" style="left:450.30px;transform:translateX(-50%);top:545.82px;font-size:13.20px;line-height:13.20px;color:#f4f4f4;">100%</div>
<div style="position:absolute;left:1310px;top:353px;width:13px;height:12px;background:#239b63;"></div>
<div class="t" style="left:1329.50px;top:354.77px;font-size:12.90px;line-height:12.90px;color:#222;"><span style="color:#595959">error</span> <span style="color:#444">(28)</span></div>
<div style="position:absolute;left:1310px;top:381.5px;width:13px;height:12px;background:#0a84fe;"></div>
<div class="t" style="left:1329.50px;top:383.27px;font-size:12.90px;line-height:12.90px;color:#222;"><span style="color:#595959">notice</span> <span style="color:#444">(8)</span></div>
<div style="position:absolute;left:1310px;top:410px;width:13px;height:12px;background:#a89633;"></div>
<div class="t" style="left:1329.50px;top:411.77px;font-size:12.90px;line-height:12.90px;color:#222;"><span style="color:#595959">warn</span> <span style="color:#444">(2)</span></div>
<svg style="position:absolute;left:1538.2px;top:358.7px;" width="212.6" height="212.6" viewBox="0 0 212.6 212.6"><path d="M106.30 2.00 A104.3 104.3 0 1 1 2.36 114.91 L37.24 112.02 A69.3 69.3 0 1 0 106.30 37.00 Z" fill="#239b63" stroke="#fff" stroke-width="1"/><path d="M2.36 114.91 A104.3 104.3 0 0 1 72.43 7.65 L83.80 40.75 A69.3 69.3 0 0 0 37.24 112.02 Z" fill="#0a84fe" stroke="#fff" stroke-width="1"/><path d="M72.43 7.65 A104.3 104.3 0 0 1 106.30 2.00 L106.30 37.00 A69.3 69.3 0 0 0 83.80 40.75 Z" fill="#a89633" stroke="#fff" stroke-width="1"/></svg>
<svg style="position:absolute;left:1835px;top:305px;" width="16" height="16" viewBox="0 0 16 16"><path d="M7 3H1.5v11.5H13V9" fill="none" stroke="#a6a6a6" stroke-width="1.5"/><path d="M8 8l6.5-6.5M10 1.5h4.5V6" fill="none" stroke="#a6a6a6" stroke-width="1.5"/></svg>
<svg style="position:absolute;left:1857px;top:304px;" width="16" height="16" viewBox="0 0 16 16"><path d="M2.5 7A5.5 5.5 0 0 1 12.5 4.5M13.5 9A5.5 5.5 0 0 1 3.5 11.5" fill="none" stroke="#a6a6a6" stroke-width="1.8"/><path d="M14.5 1v5h-5z" fill="#a6a6a6"/><path d="M1.5 15v-5h5z" fill="#a6a6a6"/></svg>
<div style="position:absolute;left:95px;top:658px;width:13px;height:12px;background:#239b63;"></div>
<div class="t" style="left:114.50px;top:659.77px;font-size:12.90px;line-height:12.90px;color:#222;"><span style="color:#595959">5.5.10</span> <span style="color:#444">(132)</span></div>
<div style="position:absolute;left:95px;top:686.5px;width:13px;height:12px;background:#0a84fe;"></div>
<div class="t" style="left:114.50px;top:688.27px;font-size:12.90px;line-height:12.90px;color:#222;"><span style="color:#595959">5.5.1</span> <span style="color:#444">(20)</span></div>
<svg style="position:absolute;left:329.7px;top:664.1px;" width="212.6" height="212.6" viewBox="0 0 212.6 212.6"><path d="M106.30 2.00 A104.3 104.3 0 1 1 29.56 35.66 L55.31 59.36 A69.3 69.3 0 1 0 106.30 37.00 Z" fill="#239b63" stroke="#fff" stroke-width="1"/><path d="M29.56 35.66 A104.3 104.3 0 0 1 106.30 2.00 L106.30 37.00 A69.3 69.3 0 0 0 55.31 59.36 Z" fill="#0a84fe" stroke="#fff" stroke-width="1"/></svg>
<div class="t" style="left:401.30px;transform:translateX(-50%);top:685.32px;font-size:13.20px;line-height:13.20px;color:#f4f4f4;">13.2%</div>
<div class="t" style="left:470.70px;transform:translateX(-50%);top:843.42px;font-size:13.20px;line-height:13.20px;color:#f4f4f4;">86.8%</div>
<div style="position:absolute;left:698px;top:521px;width:542px;height:1px;background:#e6e6e6;"></div>
<div style="position:absolute;left:698px;top:521px;width:1px;height:4px;background:#e0e0e0;"></div>
<div class="t" style="left:698.50px;transform:translateX(-50%);top:529.64px;font-size:14.00px;line-height:14.00px;color:#666;">0</div>
<div style="position:absolute;left:787.86px;top:521px;width:1px;height:4px;background:#e0e0e0;"></div>
<div class="t" style="left:788.36px;transform:translateX(-50%);top:529.64px;font-size:14.00px;line-height:14.00px;color:#666;">20</div>
<div style="position:absolute;left:877.72px;top:521px;width:1px;height:4px;background:#e0e0e0;"></div>
<div class="t" style="left:878.22px;transform:translateX(-50%);top:529.64px;font-size:14.00px;line-height:14.00px;color:#666;">40</div>
<div style="position:absolute;left:967.58px;top:521px;width:1px;height:4px;background:#e0e0e0;"></div>
<div class="t" style="left:968.08px;transform:translateX(-50%);top:529.64px;font-size:14.00px;line-height:14.00px;color:#666;">60</div>
<div style="position:absolute;left:1057.44px;top:521px;width:1px;height:4px;background:#e0e0e0;"></div>
<div class="t" style="left:1057.94px;transform:translateX(-50%);top:529.64px;font-size:14.00px;line-height:14.00px;color:#666;">80</div>
<div style="position:absolute;left:1147.3px;top:521px;width:1px;height:4px;background:#e0e0e0;"></div>
<div class="t" style="left:1147.80px;transform:translateX(-50%);top:529.64px;font-size:14.00px;line-height:14.00px;color:#666;">100</div>
<div style="position:absolute;left:1237.16px;top:521px;width:1px;height:4px;background:#e0e0e0;"></div>
<div class="t" style="left:1237.66px;transform:translateX(-50%);top:529.64px;font-size:14.00px;line-height:14.00px;color:#666;">120</div>
<div class="t" style="left:968.50px;transform:translateX(-50%);top:557.87px;font-size:15.50px;line-height:15.50px;color:#666;">count</div>
<div style="position:absolute;left:697.5px;top:353.5px;width:503.716px;height:37px;background:#b5a347;"></div>
<div class="t" style="left:700.20px;top:363.82px;font-size:15.80px;line-height:15.80px;color:#fff;font-weight:700;text-shadow:-1px -1px 0 #333,1px -1px 0 #333,-1px 1px 0 #333,1px 1px 0 #333,0 1px 0 #333,0 -1px 0 #333,1px 0 0 #333,-1px 0 0 #333;">ip-172-31-13-154.us-east-2.compute.internal - 112</div>
<div style="position:absolute;left:697.5px;top:415.5px;width:90.36px;height:37px;background:#1a8cff;"></div>
<div class="t" style="left:700.20px;top:425.82px;font-size:15.80px;line-height:15.80px;color:#fff;font-weight:700;text-shadow:-1px -1px 0 #333,1px -1px 0 #333,-1px 1px 0 #333,1px 1px 0 #333,0 1px 0 #333,0 -1px 0 #333,1px 0 0 #333,-1px 0 0 #333;">ip-172-31-13-154.south.compute.internal - 20</div>
<div style="position:absolute;left:697.5px;top:477.5px;width:90.36px;height:37px;background:#3aa374;"></div>
<div class="t" style="left:700.20px;top:487.82px;font-size:15.80px;line-height:15.80px;color:#fff;font-weight:700;text-shadow:-1px -1px 0 #333,1px -1px 0 #333,-1px 1px 0 #333,1px 1px 0 #333,0 1px 0 #333,0 -1px 0 #333,1px 0 0 #333,-1px 0 0 #333;">ip-172-31-13-154.us-east.compute.internal - 20</div>
<div style="position:absolute;left:1240px;top:347px;width:14px;height:175px;box-sizing:border-box;background:#dbdfe0;border:1px solid #9c9fa0;border-right:2px solid #979b9c;"></div>
<div style="position:absolute;left:698px;top:826px;width:542px;height:1px;background:#e6e6e6;"></div>
<div style="position:absolute;left:698px;top:826px;width:1px;height:4px;background:#e0e0e0;"></div>
<div class="t" style="left:698.50px;transform:translateX(-50%);top:834.64px;font-size:14.00px;line-height:14.00px;color:#666;">0</div>
<div style="position:absolute;left:876.2px;top:826px;width:1px;height:4px;background:#e0e0e0;"></div>
<div class="t" style="left:876.70px;transform:translateX(-50%);top:834.64px;font-size:14.00px;line-height:14.00px;color:#666;">10</div>
<div style="position:absolute;left:1054.4px;top:826px;width:1px;height:4px;background:#e0e0e0;"></div>
<div class="t" style="left:1054.90px;transform:translateX(-50%);top:834.64px;font-size:14.00px;line-height:14.00px;color:#666;">20</div>
<div style="position:absolute;left:1232.6px;top:826px;width:1px;height:4px;background:#e0e0e0;"></div>
<div class="t" style="left:1233.10px;transform:translateX(-50%);top:834.64px;font-size:14.00px;line-height:14.00px;color:#666;">30</div>
<div class="t" style="left:968.50px;transform:translateX(-50%);top:862.87px;font-size:15.50px;line-height:15.50px;color:#666;">count</div>
<div style="position:absolute;left:697.5px;top:720.4px;width:499.46px;height:37.4px;background:#3aa374;"></div>
<div class="t" style="left:700.20px;top:730.92px;font-size:15.80px;line-height:15.80px;color:#fff;font-weight:700;text-shadow:-1px -1px 0 #333,1px -1px 0 #333,-1px 1px 0 #333,1px 1px 0 #333,0 1px 0 #333,0 -1px 0 #333,1px 0 0 #333,-1px 0 0 #333;">ip-172-31-13-154.us-east-2.compute.internal - 28</div>
<div style="position:absolute;left:1240px;top:652px;width:14px;height:175px;box-sizing:border-box;background:#dbdfe0;border:1px solid #9c9fa0;border-right:2px solid #979b9c;"></div>
<div style="position:absolute;left:1306px;top:826px;width:541px;height:1px;background:#e6e6e6;"></div>
<div style="position:absolute;left:1306px;top:826px;width:1px;height:4px;background:#e0e0e0;"></div>
<div class="t" style="left:1306.50px;transform:translateX(-50%);top:834.64px;font-size:14.00px;line-height:14.00px;color:#666;">0</div>
<div style="position:absolute;left:1405.6px;top:826px;width:1px;height:4px;background:#e0e0e0;"></div>
<div class="t" style="left:1406.10px;transform:translateX(-50%);top:834.64px;font-size:14.00px;line-height:14.00px;color:#666;">0.2</div>
<div style="position:absolute;left:1505.2px;top:826px;width:1px;height:4px;background:#e0e0e0;"></div>
<div class="t" style="left:1505.70px;transform:translateX(-50%);top:834.64px;font-size:14.00px;line-height:14.00px;color:#666;">0.4</div>
<div style="position:absolute;left:1604.8px;top:826px;width:1px;height:4px;background:#e0e0e0;"></div>
<div class="t" style="left:1605.30px;transform:translateX(-50%);top:834.64px;font-size:14.00px;line-height:14.00px;color:#666;">0.6</div>
<div style="position:absolute;left:1704.4px;top:826px;width:1px;height:4px;background:#e0e0e0;"></div>
<div class="t" style="left:1704.90px;transform:translateX(-50%);top:834.64px;font-size:14.00px;line-height:14.00px;color:#666;">0.8</div>
<div style="position:absolute;left:1804px;top:826px;width:1px;height:4px;background:#e0e0e0;"></div>
<div class="t" style="left:1804.50px;transform:translateX(-50%);top:834.64px;font-size:14.00px;line-height:14.00px;color:#666;">1</div>
<div class="t" style="left:1576.50px;transform:translateX(-50%);top:862.87px;font-size:15.50px;line-height:15.50px;color:#666;">count</div>
<div style="position:absolute;left:1305.5px;top:672px;width:498.5px;height:37.5px;background:#1a8cff;"></div>
<div class="t" style="left:1308.20px;top:682.57px;font-size:15.80px;line-height:15.80px;color:#fff;font-weight:700;text-shadow:-1px -1px 0 #333,1px -1px 0 #333,-1px 1px 0 #333,1px 1px 0 #333,0 1px 0 #333,0 -1px 0 #333,1px 0 0 #333,-1px 0 0 #333;">ip-172-31-13-154.south.compute.internal - 1</div>
<div style="position:absolute;left:1305.5px;top:769px;width:498.5px;height:37.5px;background:#3aa374;"></div>
<div class="t" style="left:1308.20px;top:779.57px;font-size:15.80px;line-height:15.80px;color:#fff;font-weight:700;text-shadow:-1px -1px 0 #333,1px -1px 0 #333,-1px 1px 0 #333,1px 1px 0 #333,0 1px 0 #333,0 -1px 0 #333,1px 0 0 #333,-1px 0 0 #333;">ip-172-31-13-154.us-east.compute.internal - 1</div>
<div style="position:absolute;left:1847px;top:652px;width:14px;height:175px;box-sizing:border-box;background:#dbdfe0;border:1px solid #9c9fa0;border-right:2px solid #979b9c;"></div>
</body></html>
